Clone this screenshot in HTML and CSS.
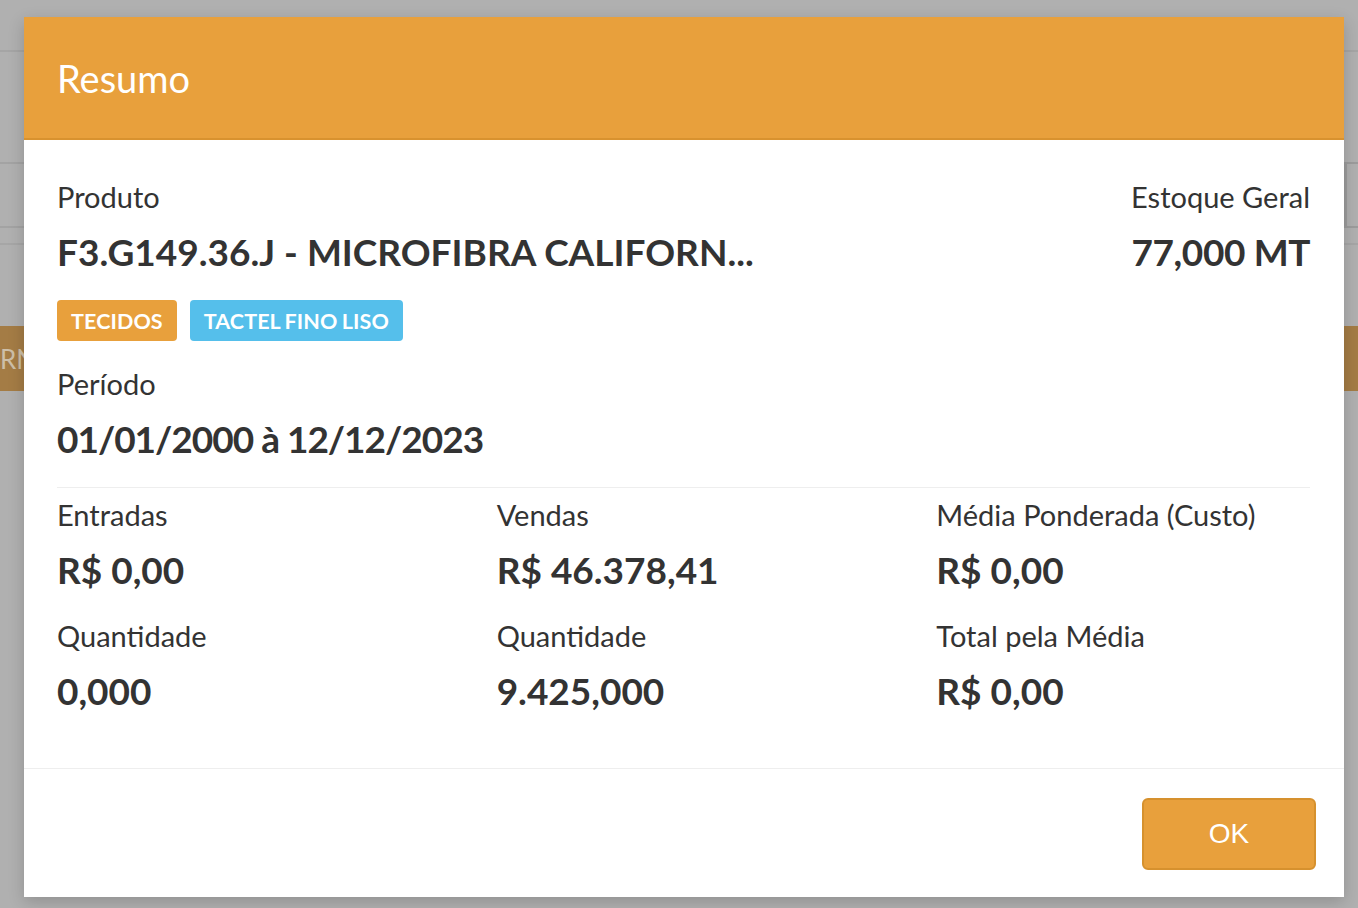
FILE: index.html
```html
<!DOCTYPE html>
<html lang="pt-BR">
<head>
<meta charset="utf-8">
<title>Resumo</title>
<link rel="stylesheet" href="styles.css">
</head>
<body>
<div class="page">
  <div class="topbar"></div>
  <div class="filters">
    <div class="input-left"></div>
    <div class="input-right"></div>
  </div>
  <div class="hline"></div>
  <div class="brownbar"><span class="bar-text">RN</span></div>
</div>

<div class="modal">
  <div class="modal-header">
    <h2 class="modal-title">Resumo</h2>
  </div>
  <div class="modal-body">
    <div class="top-row">
      <div class="field">
        <div class="label">Produto</div>
        <div class="value">F3.G149.36.J - MICROFIBRA CALIFORN...</div>
      </div>
      <div class="field field-right">
        <div class="label">Estoque Geral</div>
        <div class="value value-stock">77,000 MT</div>
      </div>
    </div>
    <div class="badges">
      <span class="badge badge-orange">TECIDOS</span>
      <span class="badge badge-blue">TACTEL FINO LISO</span>
    </div>
    <div class="field period">
      <div class="label">Período</div>
      <div class="value value-date">01/01/2000 à 12/12/2023</div>
    </div>
    <div class="divider"></div>
    <div class="stats">
      <div class="stat">
        <div class="label">Entradas</div>
        <div class="value">R$ 0,00</div>
      </div>
      <div class="stat">
        <div class="label">Vendas</div>
        <div class="value">R$ 46.378,41</div>
      </div>
      <div class="stat">
        <div class="label">Média Ponderada (Custo)</div>
        <div class="value">R$ 0,00</div>
      </div>
      <div class="stat">
        <div class="label">Quantidade</div>
        <div class="value">0,000</div>
      </div>
      <div class="stat">
        <div class="label">Quantidade</div>
        <div class="value">9.425,000</div>
      </div>
      <div class="stat">
        <div class="label">Total pela Média</div>
        <div class="value">R$ 0,00</div>
      </div>
    </div>
  </div>
  <div class="modal-footer">
    <button class="btn-ok" type="button">OK</button>
  </div>
</div>
</body>
</html>
```

FILE: styles.css
```css
* { box-sizing: border-box; }

html, body {
  margin: 0;
  padding: 0;
  width: 1358px;
  height: 908px;
  overflow: hidden;
}

body {
  background: #b0b0b0;
  font-family: "Lato", "Liberation Sans", sans-serif;
  color: #333333;
  position: relative;
}

/* underlying page (dimmed) */
.topbar {
  height: 52px;
  border-bottom: 2px solid #a5a5a5;
}

.filters {
  margin-top: 110px;
  display: flex;
  height: 66px;
}

.input-left {
  width: 300px;
  margin-left: -20px;
  border-top: 2px solid #a3a3a3;
  border-bottom: 2px solid #a3a3a3;
}

.input-right {
  width: 120px;
  margin-left: auto;
  margin-right: -106px;
  border: 2px solid #9c9c9c;
  border-left-width: 3px;
}

.hline {
  margin-top: 15px;
  height: 2px;
  background: #a6a6a6;
}

.brownbar {
  margin-top: 81px;
  height: 65px;
  background: #a47c45;
  display: flex;
  align-items: center;
  overflow: hidden;
}

.bar-text {
  margin-left: 0;
  font-size: 26px;
  color: #cdbfa8;
}

/* modal */
.modal {
  position: absolute;
  left: 24px;
  top: 17px;
  width: 1320px;
  height: 880px;
  background: #ffffff;
  box-shadow: 0 5px 15px rgba(0, 0, 0, 0.18);
  display: flex;
  flex-direction: column;
}

.modal-header {
  background: #e8a03c;
  border-bottom: 2px solid #d8922f;
  padding: 38px 33px 36px;
}

.modal-title {
  margin: 0;
  font-size: 38px;
  line-height: 47px;
  font-weight: 400;
  color: #ffffff;
}

.modal-body {
  padding: 39px 34px 53px 33px;
  border-bottom: 1px solid #eeeeee;
}

.label {
  font-size: 29px;
  line-height: 36px;
  font-weight: 400;
  color: #333333;
}

.value {
  margin-top: 13px;
  font-size: 37px;
  line-height: 48px;
  font-weight: 700;
  color: #333333;
}

.value-stock {
  letter-spacing: -0.4px;
}

.value-date {
  letter-spacing: -1px;
}

.top-row {
  display: flex;
  justify-content: space-between;
}

.field-right {
  text-align: right;
}

.badges {
  margin-top: 24px;
  display: flex;
  gap: 13px;
}

.badge {
  height: 41px;
  padding: 0 14px;
  border-radius: 4px;
  display: inline-flex;
  align-items: center;
  font-size: 21.5px;
  font-weight: 700;
  letter-spacing: 0.1px;
  word-spacing: -1px;
  color: #ffffff;
}

.badge-orange { background: #e8a03c; }
.badge-blue { background: #55bfeb; }

.period {
  margin-top: 25px;
}

.divider {
  margin-top: 24px;
  height: 1px;
  background: #eeeeee;
}

.stats {
  margin: 9px -33px 0;
  display: grid;
  grid-template-columns: repeat(3, 1fr);
  row-gap: 24px;
}

.stat {
  padding: 0 33px;
}

.modal-footer {
  display: flex;
  justify-content: flex-end;
  padding: 29px 28px 0;
}

.btn-ok {
  width: 174px;
  height: 72px;
  background: #e8a03c;
  border: 2px solid #d6912e;
  border-radius: 6px;
  color: #ffffff;
  font-family: "Liberation Sans", Arial, sans-serif;
  font-size: 28px;
  font-weight: 400;
  cursor: pointer;
}
```
